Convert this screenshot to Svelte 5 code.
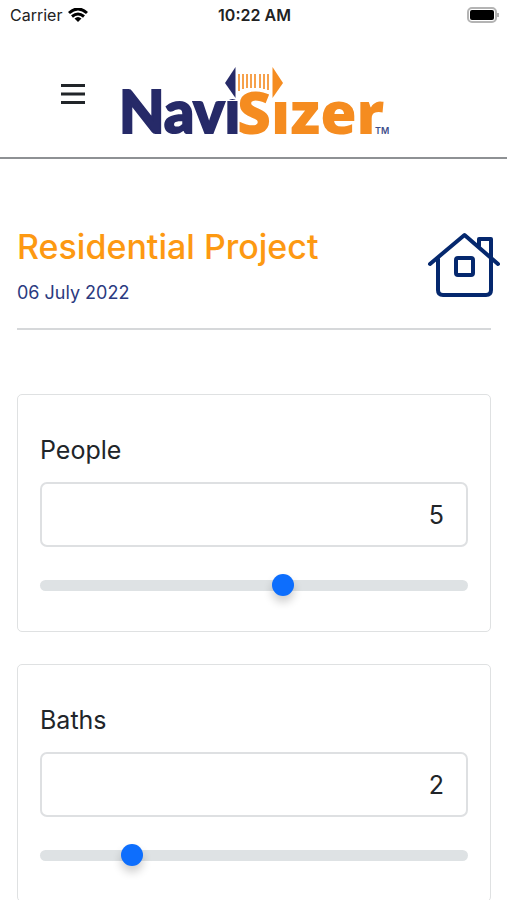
<script>
  let fields = $state([
    { id: 'people', label: 'People', value: 5, min: 1, max: 8 },
    { id: 'baths', label: 'Baths', value: 2, min: 1, max: 6 }
  ]);
</script>

<div class="status-bar">
  <div class="carrier">
    <span>Carrier</span>
    <svg width="20" height="14" viewBox="0 0 20 14" aria-hidden="true">
      <path d="M1 5 Q10 -3 19 5" />
      <path d="M4 8.5 Q10 3.5 16 8.5" />
      <path class="solid" d="M6.5 10.5 Q10 7.5 13.5 10.5 L10 14 Z" />
    </svg>
  </div>
  <time>10:22 AM</time>
  <div class="battery">
    <svg width="32" height="16" viewBox="0 0 32 16" aria-hidden="true">
      <rect x="1" y="1" width="28" height="14" rx="4" fill="#fff" stroke="#b4b4b4" stroke-width="2" />
      <rect x="3" y="3" width="24" height="10" rx="2" fill="#000" />
      <path d="M31 6 v4" stroke="#b4b4b4" stroke-width="2" />
    </svg>
  </div>
</div>

<header class="navbar">
  <button class="menu" aria-label="Menu">
    <svg width="24" height="20" viewBox="0 0 24 20">
      <path d="M0 1.5 h24 M0 10 h24 M0 18.5 h24" />
    </svg>
  </button>
  <a class="logo" href="/" aria-label="NaviSizer">
    <svg width="276" height="116" viewBox="-6 -29 276 116">
      <text class="wordmark navi navy" x="-2" y="68">Navi</text>
      <!-- the arrow heads stand in for the dots of both i's -->
      <path fill="#fff" d="M100 0 h22 v34 h-22 Z" />
      <text class="wordmark sizer orange" x="116" y="69">Sizer</text>
      <path fill="#fff" d="M150 0 h18 v34 h-18 Z" />
      <path class="navy" d="M114.5 2 V33 L104 18 Z" />
      <path class="orange" d="M151.5 2 V33 L162 18 Z" />
      <path class="ticks" d="M118 9 V26 M122 9 V24 M126 9 V23 M130 9 V23 M134 9 V23 M139 9 V23 M143 9 V24 M147 9 V25" />
      <text class="tm" x="254" y="69">TM</text>
    </svg>
  </a>
</header>

<main>
  <section class="project">
    <div>
      <h1>Residential Project</h1>
      <p class="date">06 July 2022</p>
    </div>
    <svg class="house" width="74" height="68" viewBox="0 0 74 68" aria-hidden="true">
      <path d="M3 33 L37.5 4 L71 33" />
      <path d="M11 28 V59 Q11 64 16 64 H59 Q64 64 64 59 V8 H52 V15" />
      <rect x="29" y="27" width="17" height="17" rx="2" />
    </svg>
  </section>

  {#each fields as field}
    <section class="card">
      <label for={field.id}>{field.label}</label>
      <input id={field.id} class="value" type="text" inputmode="numeric" bind:value={field.value} />
      <input
        class="slider"
        type="range"
        aria-label={field.label}
        min={field.min}
        max={field.max}
        bind:value={field.value}
      />
    </section>
  {/each}
</main>

<style>
  :global(body) {
    margin: 0;
    background: #fff;
    color: #212529;
    font-family: Inter, 'Liberation Sans', sans-serif;
    overflow-x: hidden;
  }

  .status-bar {
    display: grid;
    grid-template-columns: 1fr auto 1fr;
    align-items: center;
    height: 30px;
    padding: 0 8px 0 10px;
    font-size: 16px;
    color: #222;
  }

  .carrier {
    display: flex;
    align-items: center;
    gap: 6px;
  }

  .carrier path {
    fill: none;
    stroke: #000;
    stroke-width: 3;
  }

  .carrier .solid {
    fill: #000;
    stroke: none;
  }

  .status-bar time {
    font-weight: 600;
  }

  .battery {
    display: flex;
    justify-content: flex-end;
  }

  .navbar {
    display: flex;
    align-items: center;
    gap: 18px;
    box-sizing: border-box;
    height: 129px;
    padding: 0 49px;
    border-bottom: 2px solid #8e9194;
  }

  .menu {
    display: flex;
    padding: 12px;
    border: 0;
    background: none;
  }

  .menu path {
    stroke: #212529;
    stroke-width: 3;
  }

  .logo {
    display: flex;
  }

  .logo svg {
    overflow: visible;
  }

  .wordmark {
    font-size: 59px;
  }

  .navi {
    font-family: Lato, sans-serif;
    font-weight: 900;
    stroke: #262a68;
    stroke-width: 2;
  }

  .sizer {
    font-family: 'Open Sans', sans-serif;
    font-weight: 800;
  }

  .navy {
    fill: #262a68;
  }

  .orange {
    fill: #f58c20;
  }

  .ticks {
    stroke: #f6a14c;
    stroke-width: 2;
  }

  .tm {
    font-size: 9px;
    font-weight: 600;
    fill: #3c4c88;
  }

  main {
    padding: 64px 16px 32px 17px;
  }

  .project {
    display: flex;
    justify-content: space-between;
    align-items: center;
    margin-bottom: 64px;
    padding-bottom: 21px;
    border-bottom: 2px solid #d6d8da;
  }

  h1 {
    margin: 0;
    font-size: 34px;
    font-weight: 500;
    line-height: 48px;
    color: #fd9912;
  }

  .date {
    margin: 8px 0 0;
    font-size: 18px;
    line-height: 28px;
    color: #2b3a80;
  }

  .house {
    flex: none;
    margin-right: -10px;
    fill: none;
    stroke: #05286e;
    stroke-width: 4;
    stroke-linecap: round;
    stroke-linejoin: round;
  }

  .card {
    display: flex;
    flex-direction: column;
    margin-bottom: 32px;
    padding: 35px 22px;
    border: 1px solid #dfe1e2;
    border-radius: 5px;
  }

  .card label {
    margin-bottom: 12px;
    font-size: 25px;
    line-height: 40px;
  }

  .value {
    box-sizing: border-box;
    width: 100%;
    height: 65px;
    padding: 0 22px;
    border: 2px solid #dee0e2;
    border-radius: 7px;
    background: #fff;
    color: #212529;
    font-family: inherit;
    font-size: 25px;
    text-align: right;
  }

  .slider {
    appearance: none;
    width: 100%;
    height: 22px;
    margin: 27px 0 0;
    background: none;
  }

  .slider::-webkit-slider-runnable-track {
    height: 11px;
    border-radius: 6px;
    background: #dee2e4;
  }

  .slider::-webkit-slider-thumb {
    appearance: none;
    width: 22px;
    height: 22px;
    margin-top: -6px;
    border-radius: 50%;
    background: #0d6efd;
    box-shadow: 0 6px 10px rgba(0, 0, 0, 0.2);
  }
</style>
